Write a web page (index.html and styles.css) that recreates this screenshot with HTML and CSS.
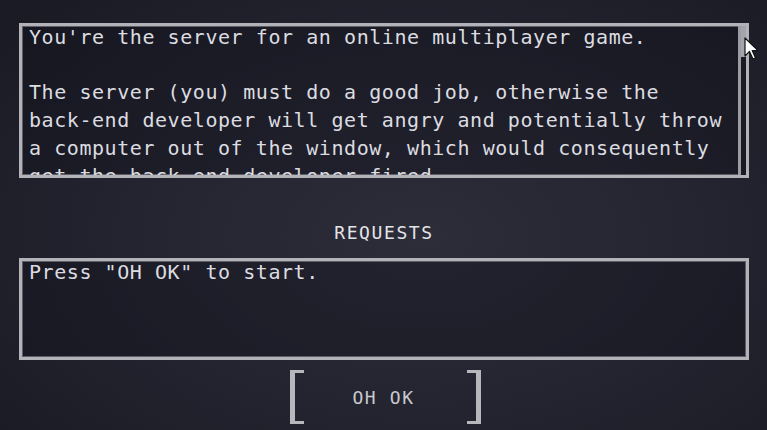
FILE: index.html
```html
<!DOCTYPE html>
<html lang="en">
<head>
  <meta charset="UTF-8">
  <title>Server</title>
  <link rel="stylesheet" href="styles.css">
</head>
<body>
<div class="screen">
  <div class="panel story">
    <div class="story-text">
      <p>You're the server for an online multiplayer game.</p>
      <p>The server (you) must do a good job, otherwise the back&#8209;end developer will get angry and potentially throw a computer out of the window, which would consequently get the back&#8209;end developer fired.</p>
    </div>
    <div class="scrollbar"><div class="thumb"></div></div>
  </div>

  <div class="label">REQUESTS</div>

  <div class="panel requests">
    <p>Press "OH OK" to start.</p>
  </div>

  <div class="actions">
    <button class="bracket-btn" type="button">
      <span class="bracket left"></span>
      <span class="btn-text">OH OK</span>
      <span class="bracket right"></span>
    </button>
  </div>
</div>

<svg class="cursor" width="16" height="24" viewBox="0 0 16 24">
  <path d="M1 1 L1 19 L5.5 14.5 L9 22 L11.5 21 L8.2 13.5 L14 13.5 Z" fill="#fff" stroke="#111" stroke-width="1.2" stroke-linejoin="round"/>
</svg>
</body>
</html>
```

FILE: styles.css
```css
html, body {
  margin: 0;
  height: 100%;
}

body {
  background: radial-gradient(ellipse 70% 75% at 55% 55%, #2c2d39 0%, #23242f 55%, #1a1b25 100%);
  color: #dcdce0;
  font-family: "DejaVu Sans Mono", "Liberation Mono", monospace;
  overflow: hidden;
}

.screen {
  padding: 23px 18px 0 19px;
  width: 730px;
}

.panel {
  box-sizing: border-box;
  border: 3px solid #b2b2b8;
  box-shadow: inset 0 0 0 1px #5e5e68;
  background: rgba(14, 14, 22, .3);
}

.panel p {
  margin: 0;
  font-size: 20px;
  letter-spacing: .56px;
  line-height: 27.7px;
}

.story {
  height: 155px;
  display: flex;
}

.story-text {
  flex: 1;
  overflow: hidden;
  padding: 0 12px 0 7px;
}

.story-text p:first-child {
  margin-top: -2px;
  margin-bottom: 27.7px;
}

.scrollbar {
  width: 5px;
  border-left: 3px solid #9c9ca4;
  background: #1a1b25;
}

.thumb {
  height: 31px;
  background: #a4a4ac;
}

.label {
  margin-top: 43px;
  text-align: center;
  font-size: 18px;
  line-height: 24px;
  letter-spacing: 1.6px;
  color: #e4e4e8;
}

.requests {
  margin-top: 13px;
  height: 102px;
  padding: 0 7px;
}

.requests p {
  margin-top: -2px;
}

.actions {
  margin-top: 10px;
  display: flex;
  justify-content: center;
}

.bracket-btn {
  display: flex;
  align-items: center;
  width: 191px;
  height: 54px;
  padding: 0;
  margin-left: 3px;
  border: 0;
  background: none;
  font: inherit;
  color: #c9c9ce;
  justify-content: space-between;
}

.bracket {
  box-sizing: border-box;
  width: 14px;
  height: 54px;
  border: 3px solid #b6b6bc;
}

.bracket.left {
  border-left-width: 5px;
  border-right: 0;
}

.bracket.right {
  border-right-width: 5px;
  border-left: 0;
}

.btn-text {
  font-size: 18px;
  letter-spacing: 1.6px;
  margin-right: 4px;
}

.cursor {
  position: absolute;
  left: 744px;
  top: 37px;
}
```
